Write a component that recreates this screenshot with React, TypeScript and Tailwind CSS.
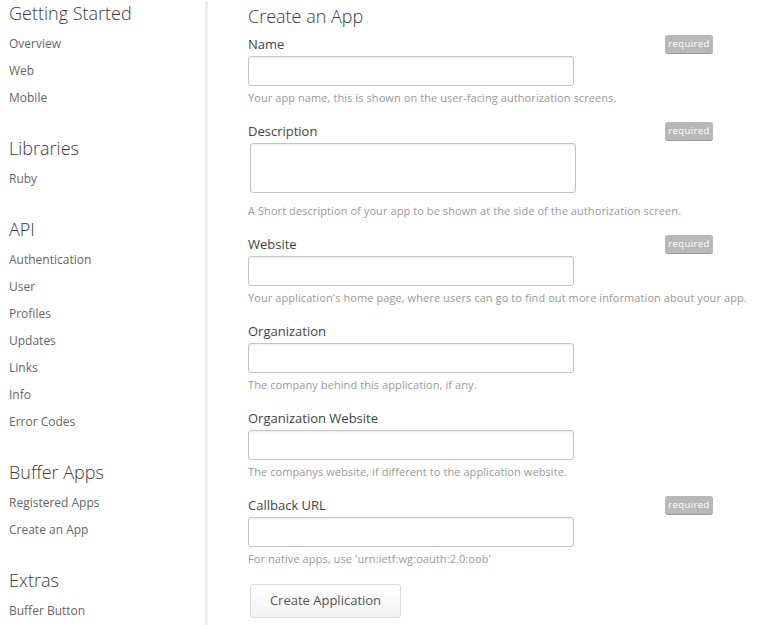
import React from "react";

const sections = [
  { title: "Getting Started", items: ["Overview", "Web", "Mobile"] },
  { title: "Libraries", items: ["Ruby"] },
  {
    title: "API",
    items: ["Authentication", "User", "Profiles", "Updates", "Links", "Info", "Error Codes"],
  },
  { title: "Buffer Apps", items: ["Registered Apps", "Create an App"] },
  { title: "Extras", items: ["Buffer Button"] },
];

const fields = [
  { label: "Name", required: true, help: "Your app name, this is shown on the user-facing authorization screens." },
  {
    label: "Description",
    required: true,
    textarea: true,
    help: "A Short description of your app to be shown at the side of the authorization screen.",
  },
  {
    label: "Website",
    required: true,
    help: "Your application's home page, where users can go to find out more information about your app.",
  },
  { label: "Organization", required: false, help: "The company behind this application, if any." },
  {
    label: "Organization Website",
    required: false,
    help: "The companys website, if different to the application website.",
  },
  { label: "Callback URL", required: true, help: "For native apps, use 'urn:ietf:wg:oauth:2.0:oob'" },
];

function Required() {
  return (
    <span className="w-[48px] h-[18px] text-center rounded-[3px] bg-[#b8b8b8] text-white text-[9.5px] leading-[17px] tracking-[0.4px] shadow-[0_1px_0_#9a9a9a]">
      required
    </span>
  );
}

function Sidebar() {
  return (
    <div className="w-[205px] shrink-0 pl-[9px]">
      {sections.map((s, i) => (
        <div key={s.title} className={i > 0 ? "mt-[24px]" : ""}>
          <h2 className="h-[26px] leading-[26px] text-[18px] font-light text-[#3a3a3a]">{s.title}</h2>
          <ul className="mt-[4px]">
            {s.items.map((it) => (
              <li key={it} className="h-[27px] leading-[27px] text-[12px] text-[#666]">
                {it}
              </li>
            ))}
          </ul>
        </div>
      ))}
    </div>
  );
}

export default function App() {
  return (
    <div
      className="flex w-[767px] h-[625px] bg-white overflow-hidden"
      style={{ fontFamily: '"Open Sans", "DejaVu Sans", sans-serif' }}
    >
      <Sidebar />
      <div className="w-[3px] shrink-0 mt-[1px] bg-[#eeeeee]" />
      <div className="pl-[40px] w-[505px]">
        <h1 className="h-[32px] leading-[32px] text-[18px] font-light text-[#3a3a3a]">Create an App</h1>
        <form className="mt-[2px]" onSubmit={(e) => e.preventDefault()}>
          {fields.map((f) => (
            <div key={f.label} className="mb-[15px]">
              <div className="flex items-center justify-between h-[20px]">
                <label className="text-[13px] leading-[20px] text-[#444]">{f.label}</label>
                {f.required && <Required />}
              </div>
              {f.textarea ? (
                <textarea className="block mt-[2px] ml-[2px] w-[326px] h-[50px] border border-[#c4c4c4] rounded-[3px] shadow-[inset_0_1px_2px_rgba(0,0,0,0.08)] resize-none outline-none" />
              ) : (
                <input
                  type="text"
                  className="block mt-[2px] w-[326px] h-[30px] border border-[#c4c4c4] rounded-[3px] shadow-[inset_0_1px_2px_rgba(0,0,0,0.08)] outline-none"
                />
              )}
              <p
                className={
                  "text-[11px] leading-[16px] text-[#999] tracking-[0.08px] whitespace-nowrap " +
                  (f.textarea ? "mt-[10px]" : "mt-[4px]")
                }
              >
                {f.help}
              </p>
            </div>
          ))}
          <button
            type="submit"
            className="mt-[2px] ml-[2px] w-[151px] h-[34px] border border-[#d9d9d9] rounded-[3px] bg-gradient-to-b from-white to-[#f3f3f3] text-[13px] text-[#555]"
          >
            Create Application
          </button>
        </form>
      </div>
    </div>
  );
}
